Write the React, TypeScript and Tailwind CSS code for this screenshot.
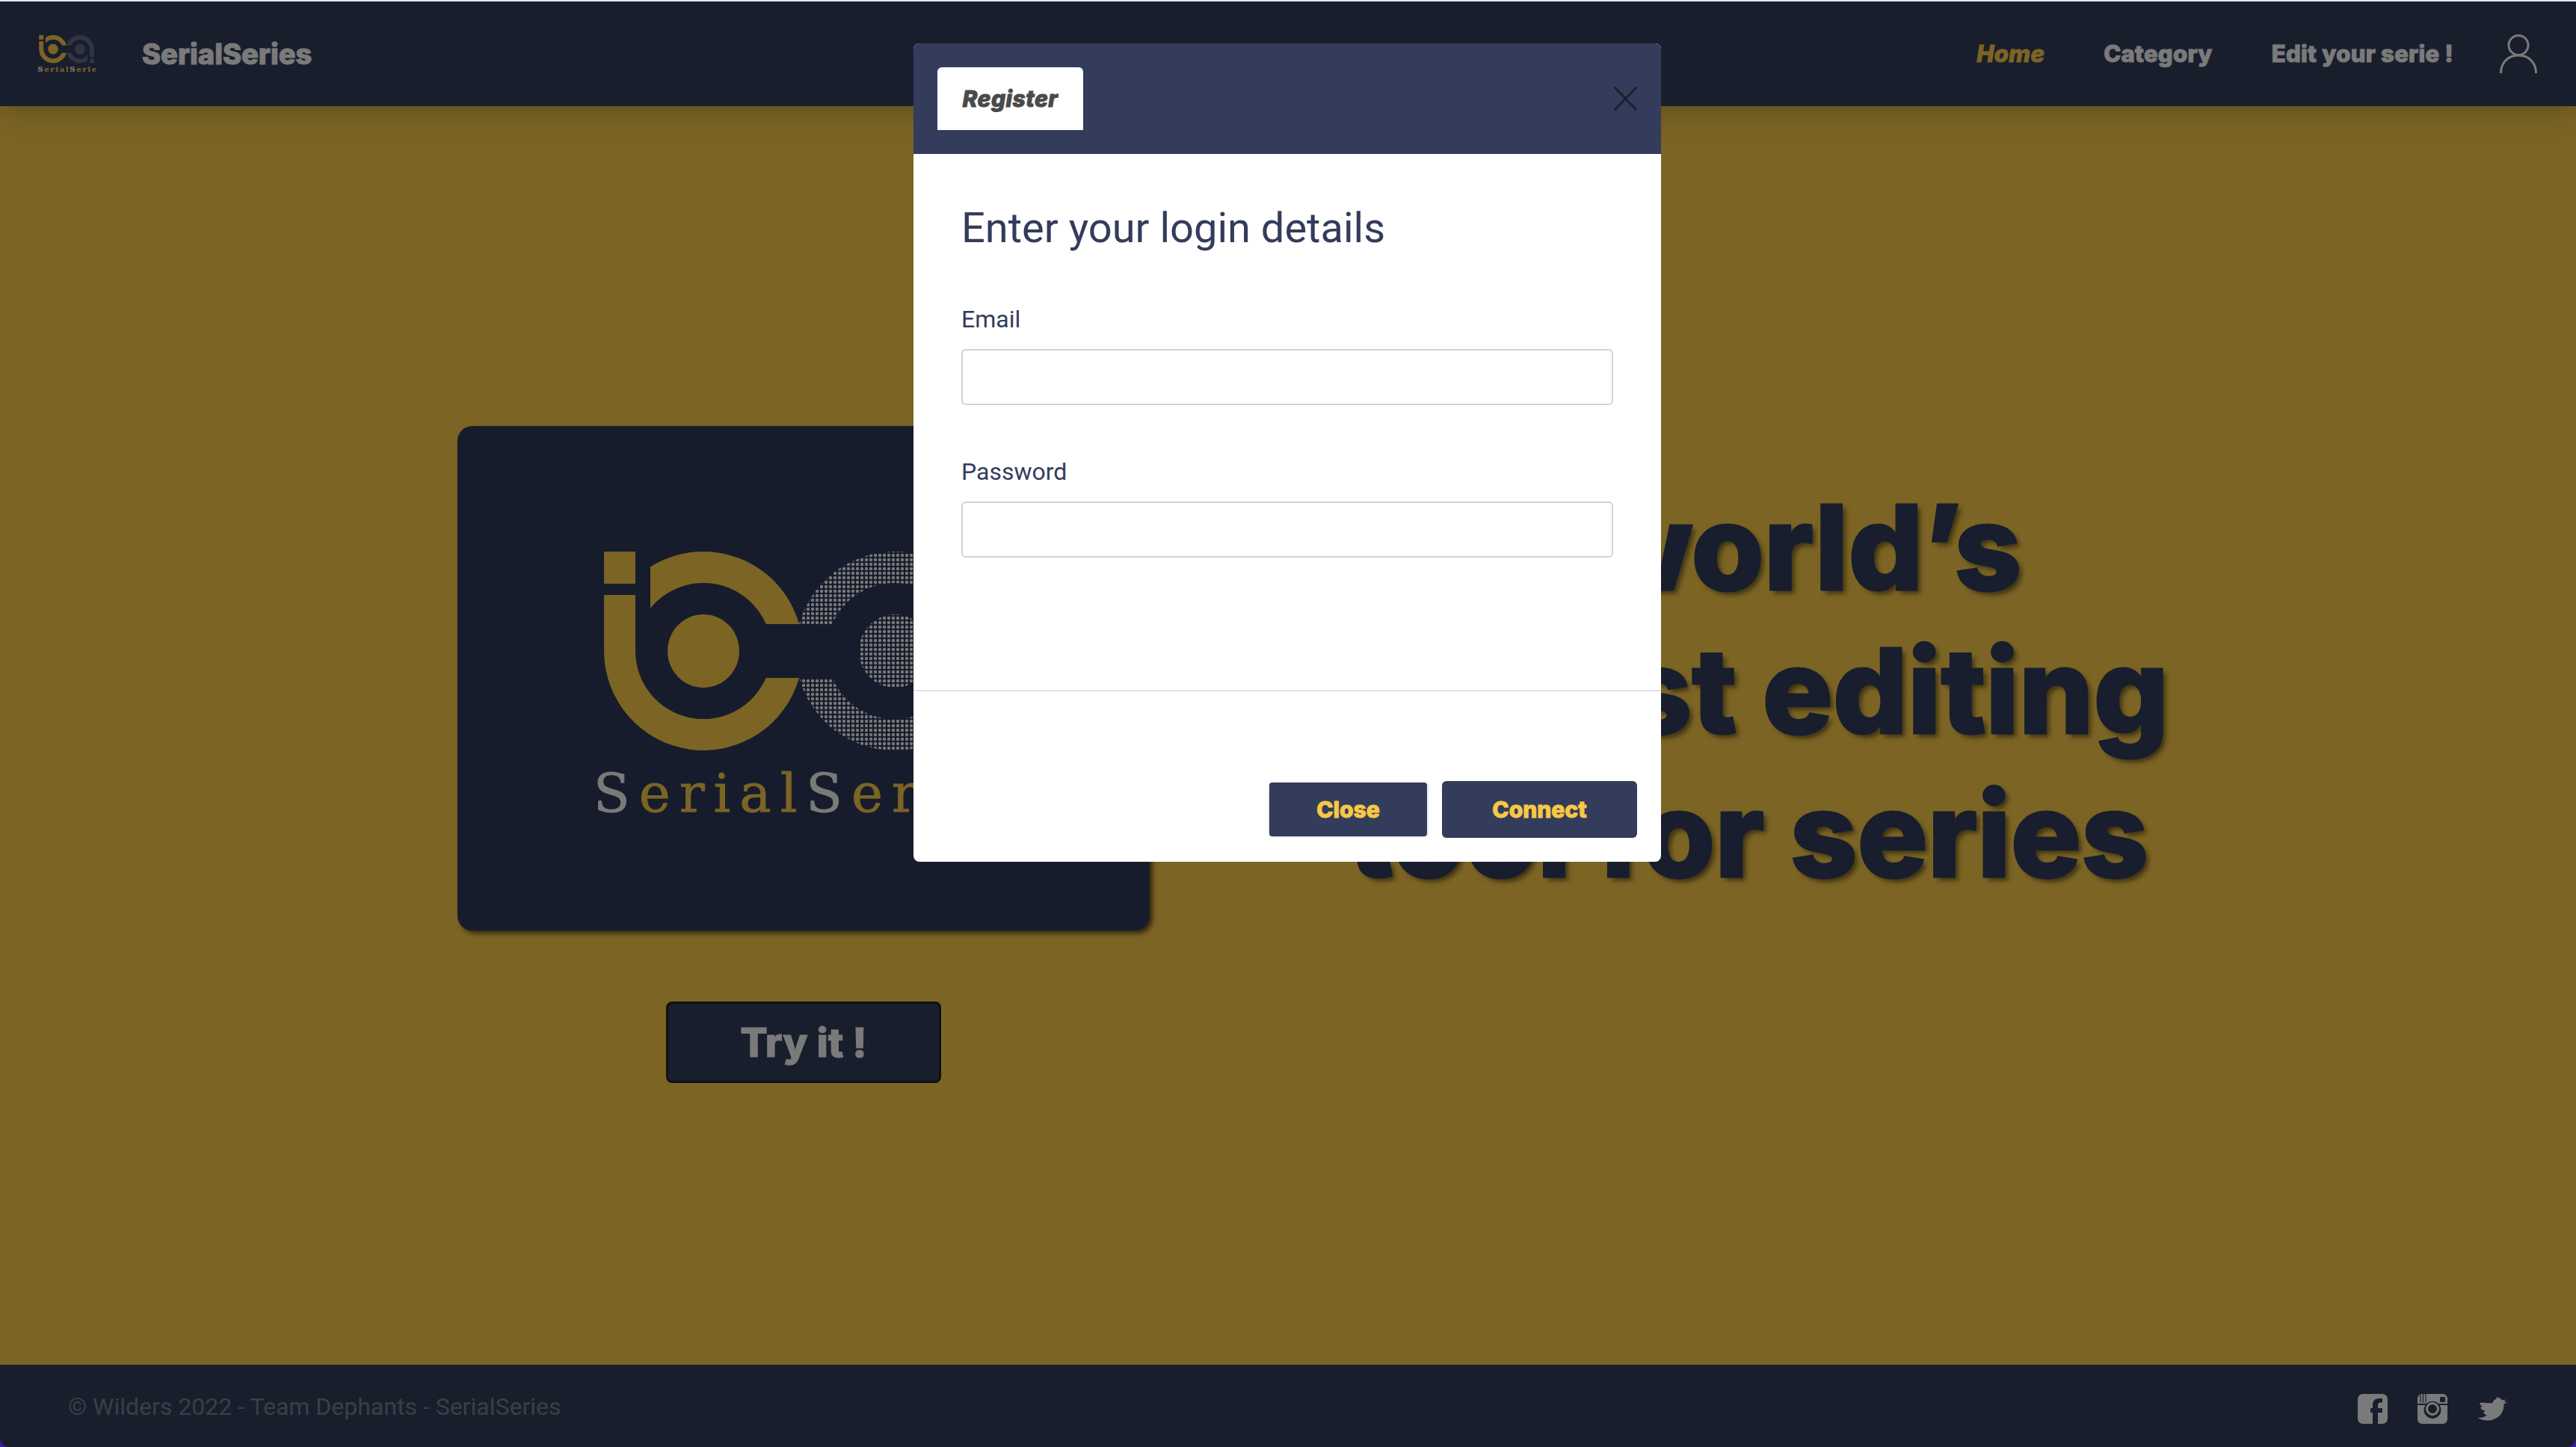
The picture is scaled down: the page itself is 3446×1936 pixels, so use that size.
import { useId } from 'react';

const ROUND = "font-['Inter',sans-serif] font-extrabold [-webkit-text-stroke:1px_currentColor]";

function Logo({ className }: { className: string }) {
  const id = useId();
  const bottom = 'M0 58 L0 133 A133 133 0 0 0 261 169 L216.6 169 A91 91 0 0 1 42 133 L42 58 Z';
  const top = 'M62 20.5 A133 133 0 0 1 261 97 L216.6 97 A91 91 0 0 0 62 76 Z';
  const parts = (
    <>
      <rect x="0" y="0" width="42" height="43" />
      <path d={bottom} />
      <path d={top} />
      <ellipse cx="133" cy="133" rx="48" ry="49" />
    </>
  );

  return (
    <svg viewBox="-14 0 550 355" className={className}>
      <defs>
        <pattern id={id} width="6" height="6" patternUnits="userSpaceOnUse">
          <circle cx="3" cy="3" r="2.2" fill="#f2f2f5" />
        </pattern>
      </defs>
      <g fill="#f7c948">{parts}</g>
      <g fill={`url(#${id})`} transform="rotate(180 261 133)">{parts}</g>
      <text
        x="-14"
        y="348"
        fontSize="71"
        letterSpacing="12"
        fontFamily="'DejaVu Serif', serif"
        fill="#f7c948"
        stroke="#f7c948"
        strokeWidth="0.8"
      >
        <tspan fill="#f5f5f5" stroke="#f5f5f5">S</tspan>erial<tspan fill="#f5f5f5" stroke="#f5f5f5">S</tspan>eries
      </text>
    </svg>
  );
}

function UserIcon() {
  return (
    <svg viewBox="0 0 50 52" className="h-[52px] w-[50px]" fill="none" stroke="#f5f5f5" strokeWidth="3">
      <ellipse cx="25" cy="14.5" rx="13" ry="13" />
      <path d="M1.5 52 C1.5 38 11 28 25 28 C39 28 48.5 38 48.5 52" />
    </svg>
  );
}

function FacebookIcon() {
  return (
    <svg viewBox="0 0 40 40" className="h-10 w-10">
      <path
        fill="#f5f5f5"
        fillRule="evenodd"
        d="M7 0 H33 A7 7 0 0 1 40 7 V33 A7 7 0 0 1 33 40 H27 V25 H33 V19 H27 V15 C27 12.5 28.5 11.5 30.5 11.5 H33 V6 H28.5 C23 6 20 9.5 20 14.5 V19 H17 V25 H20 V40 H7 A7 7 0 0 1 0 33 V7 A7 7 0 0 1 7 0 Z"
      />
    </svg>
  );
}

function InstagramIcon() {
  return (
    <svg viewBox="0 0 40 40" className="h-10 w-10">
      <path fill="#f5f5f5" d="M6 0 H34 A6 6 0 0 1 40 6 V13 H28 A11.5 11.5 0 0 0 12 13 H0 V6 A6 6 0 0 1 6 0 Z" />
      <path fill="#f5f5f5" d="M0 15 H10.5 A11.5 11.5 0 1 0 29.5 15 H40 V34 A6 6 0 0 1 34 40 H6 A6 6 0 0 1 0 34 Z" />
      <circle cx="20" cy="20" r="7.5" fill="none" stroke="#f5f5f5" strokeWidth="3" />
      <rect x="30" y="4" width="7" height="7" rx="1" fill="#343c5c" />
      <path d="M4 0 V12 M7.5 0 V12 M11 0 V12" stroke="#343c5c" strokeWidth="1.2" />
    </svg>
  );
}

function TwitterIcon() {
  return (
    <svg viewBox="0 0 40 32" className="h-8 w-10">
      <path
        fill="#f5f5f5"
        d="M0 28 C6 31 14 33 22 30 C31 27 36 19 35.5 9 L40 8 L36 6 L38 3.5 L33.5 4.5 C31 1 27 0 25 0.5 L26 3 C23 3 21 5 20.5 8 C16 9 9 7 3 8 C4 11 5 12 7 13 L4 14 C5 17 8 18 11 19 L8 20.5 C9 23 11 24 13 24.5 C10 27 5 28 0 28 Z"
      />
    </svg>
  );
}

function CloseIcon() {
  return (
    <svg viewBox="0 0 31 32" className="h-8 w-[31px]" stroke="#1a1f2e" strokeWidth="3" strokeLinecap="round">
      <path d="M1.5 1.5 L29.5 30.5 M29.5 1.5 L1.5 30.5" />
    </svg>
  );
}

function Field({ label, type }: { label: string; type: string }) {
  return (
    <div className="mt-16 last:mt-[65px]">
      <label className="block h-12 text-[32px] leading-[48px] text-[#343c5c]">{label}</label>
      <input
        type={type}
        className="mt-4 block h-[75px] w-[872px] rounded-md border-2 border-[#ced4da] bg-white"
      />
    </div>
  );
}

function LoginModal() {
  return (
    <div className="flex h-[1095px] w-[1000px] flex-col overflow-hidden rounded-lg bg-white font-['Roboto',sans-serif]">
      <div className="flex h-[148px] items-start justify-between bg-[#343c5c] pl-8 pr-8 pt-8">
        <div className={`flex h-[84px] w-[195px] items-center justify-center rounded-t-md bg-white text-[30px] italic tracking-[0.5px] text-[#4a4a4a] ${ROUND}`}>
          Register
        </div>
        <div className="mt-[26px]">
          <CloseIcon />
        </div>
      </div>
      <div className="h-[719px] border-b-2 border-[#dee2e6] px-16 pt-[66px]">
        <h2 className="text-[56px] leading-[67px] text-[#343c5c]">Enter your login details</h2>
        <Field label="Email" type="email" />
        <Field label="Password" type="password" />
      </div>
      <div className="flex flex-1 items-end justify-end gap-[18px] pb-8 pr-8">
        <button className={`h-[76px] w-[215px] rounded-md border-2 border-[#eeeeee] bg-[#343c5c] text-[30px] text-[#f7c843] ${ROUND}`}>
          Close
        </button>
        <button className={`h-[76px] w-[261px] rounded-md bg-[#343c5c] text-[30px] text-[#f7c843] ${ROUND}`}>
          Connect
        </button>
      </div>
    </div>
  );
}

export default function App() {
  return (
    <div className="h-[1936px] w-[3446px] bg-[#3c1ca8]">
      <div className="relative flex h-full flex-col overflow-hidden rounded-b-[12px] border-t-2 border-[#e5e7eb]">
        <header className={`relative z-10 flex h-[140px] items-center bg-[#333c5a] pl-[50px] pr-[52px] text-[#f5f5f5] shadow-[0_4px_40px_rgba(0,0,0,0.25)] ${ROUND}`}>
          <Logo className="h-[50px] w-[78px]" />
          <span className="ml-[62px] text-[38px]">SerialSeries</span>
          <nav className="ml-auto flex items-center text-[31px] tracking-[0.3px]">
            <a className="italic text-[#f7c948]">Home</a>
            <a className="ml-[79px]">Category</a>
            <a className="ml-[79px]">Edit your serie !</a>
            <span className="ml-[62px]">
              <UserIcon />
            </span>
          </nav>
        </header>

        <main className="flex flex-1 items-start bg-[#f7c948] pl-[612px] pt-[428px]">
          <div className="flex w-[926px] flex-none flex-col items-center">
            <div className="flex h-[675px] w-full items-center justify-center rounded-[20px] bg-[#2e3858] pr-3 pt-4 shadow-[4px_4px_6px_rgba(0,0,0,0.6)]">
              <Logo className="h-[355px] w-[550px]" />
            </div>
            <button className={`mt-[95px] h-[109px] w-[368px] rounded-lg border-[3px] border-[#222222] bg-[#333c5a] text-[54px] text-[#f5f5f5] ${ROUND}`}>
              Try it !
            </button>
          </div>
          <h1 className="ml-[151px] mt-[66px] w-[1300px] flex-none text-center font-['Inter',sans-serif] text-[157px] font-extrabold leading-[192px] text-[#303c5a] [-webkit-text-stroke:3px_currentColor] [text-shadow:5px_5px_6px_rgba(0,0,0,0.5)]">
            A world’s
            <br />
            fastest editing
            <br />
            tool for series
          </h1>
        </main>

        <footer className="flex h-[110px] items-center justify-between bg-[#333c5a] pl-[91px] pr-[92px] font-['Roboto',sans-serif]">
          <span className="mt-0.5 text-[32px] text-[#787c86]">© Wilders 2022 - Team Dephants - SerialSeries</span>
          <div className="mt-2 flex items-center gap-10">
            <FacebookIcon />
            <InstagramIcon />
            <TwitterIcon />
          </div>
        </footer>

        <div className="absolute inset-0 z-20 flex items-start bg-black/50 pl-[1222px] pt-14">
          <LoginModal />
        </div>
      </div>
    </div>
  );
}
